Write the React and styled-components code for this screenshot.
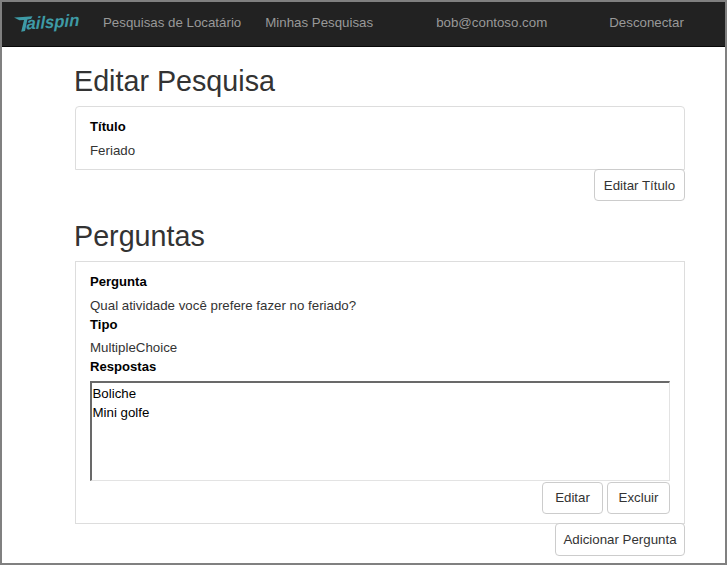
import React from "react";
import styled, { createGlobalStyle } from "styled-components";

const GlobalStyle = createGlobalStyle`
  * { box-sizing: border-box; }
  body {
    margin: 0;
    background: #fff;
    color: #333;
    font: 13.3px/20px "Liberation Sans", Arial, sans-serif;
  }
`;

const Page = styled.div`
  width: 727px;
  height: 565px;
  border: 2px solid #808080;
  background: #fff;
  overflow: hidden;
`;

const Navbar = styled.nav`
  display: flex;
  height: 45px;
  padding: 0 39px 2px 12px;
  align-items: center;
  background: #222;
  border-bottom: 1px solid #080808;
`;

const Logo = styled.svg`
  width: 70px;
  height: 32px;
  flex: none;
`;

const NavLink = styled.a`
  margin-left: ${(p) => p.$gap}px;
  color: #999;
  white-space: nowrap;
`;

const Content = styled.main`
  width: 610px;
  margin: 17px 0 0 73px;
`;

const Heading = styled.h2`
  margin: 0 0 0 -1px;
  height: 42px;
  font-size: 28.7px;
  line-height: 35px;
  font-weight: 400;
  white-space: nowrap;
`;

const Panel = styled.section`
  height: ${(p) => p.$height}px;
  padding: 10px 14px 0;
  border: 1px solid #ddd;
  border-radius: ${(p) => (p.$rounded ? "4px 4px 0 0" : "0")};
`;

const FieldList = styled.dl`
  margin: 0;
`;

const Label = styled.dt`
  height: ${(p) => p.$height || 24}px;
  color: #000;
  font-size: 13.1px;
  font-weight: 700;
`;

const Value = styled.dd`
  margin: 0;
  height: 19px;
`;

const Answers = styled.ul`
  width: 580px;
  height: 100px;
  margin: 0;
  padding: 1px 0.5px;
  list-style: none;
  color: #000;
  line-height: 19px;
  border-style: solid;
  border-width: 2px 1px 1px 2px;
  border-color: #696969 #e3e3e3 #e3e3e3 #696969;
`;

const Actions = styled.div`
  display: flex;
  justify-content: flex-end;
  gap: 4px;
  margin-top: ${(p) => p.$offset || 0}px;
  margin-bottom: ${(p) => p.$space || 0}px;
`;

const Button = styled.button`
  width: ${(p) => p.$width}px;
  height: ${(p) => p.$height || 32}px;
  padding: ${(p) => p.$drop || 0}px 0 0;
  border: 1px solid #ccc;
  border-radius: 4px;
  background: #fff;
  color: #333;
  font: inherit;
  white-space: nowrap;
`;

function TailspinLogo() {
  return (
    <Logo viewBox="0 0 70 32" role="img" aria-label="Tailspin">
      <g fill="#3e9ba6">
        <path d="M0 10.6 Q8 9.8 18.5 9.2L17 12 13.4 12.5 11 24 7.2 24.8 10 13 5.5 13.2z" />
        <text
          fontFamily="Liberation Sans, Arial, sans-serif"
          fontWeight="700"
          fontStyle="italic"
          fontSize="15.5"
          textLength="53"
          lengthAdjust="spacingAndGlyphs"
          transform="translate(12.5 22.6) rotate(-4) skewX(-4) scale(1 1.12)"
        >
          ailspin
        </text>
      </g>
    </Logo>
  );
}

export default function App() {
  return (
    <>
      <GlobalStyle />
      <Page>
        <Navbar>
          <TailspinLogo />
          <NavLink $gap={19}>Pesquisas de Locatário</NavLink>
          <NavLink $gap={24}>Minhas Pesquisas</NavLink>
          <NavLink $gap={63}>bob@contoso.com</NavLink>
          <NavLink $gap={62}>Desconectar</NavLink>
        </Navbar>
        <Content>
          <Heading>Editar Pesquisa</Heading>
          <Panel $height={64} $rounded>
            <FieldList>
              <Label>Título</Label>
              <Value>Feriado</Value>
            </FieldList>
          </Panel>
          <Actions $offset={-1} $space={18}>
            <Button $width={91} $drop={1}>Editar Título</Button>
          </Actions>
          <Heading>Perguntas</Heading>
          <Panel $height={263}>
            <FieldList>
              <Label>Pergunta</Label>
              <Value>Qual atividade você prefere fazer no feriado?</Value>
              <Label $height={23}>Tipo</Label>
              <Value>MultipleChoice</Value>
              <Label>Respostas</Label>
            </FieldList>
            <Answers>
              <li>Boliche</li>
              <li>Mini golfe</li>
            </Answers>
            <Actions $offset={1}>
              <Button $width={61}>Editar</Button>
              <Button $width={63}>Excluir</Button>
            </Actions>
          </Panel>
          <Actions $offset={-1}>
            <Button $width={130} $height={33}>Adicionar Pergunta</Button>
          </Actions>
        </Content>
      </Page>
    </>
  );
}
